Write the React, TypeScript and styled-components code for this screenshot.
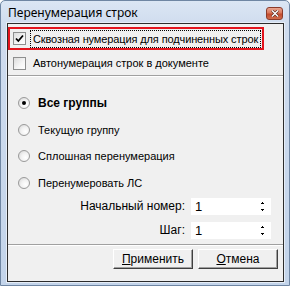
import styled, { createGlobalStyle } from "styled-components";

const GlobalStyle = createGlobalStyle`
  html, body {
    margin: 0;
    padding: 0;
    background: #ffffff;
  }
  body {
    font-family: "Liberation Sans", Arial, sans-serif;
    font-size: 11px;
    color: #000;
  }
`;

const Frame = styled.div`
  width: 290px;
  height: 286px;
  box-sizing: border-box;
  border: 1px solid #6f86a3;
  border-radius: 5px 5px 0 0;
  background: linear-gradient(to bottom, #dbe6f4 0px, #cfdcee 24px, #c3d4ea 100%);
  display: flex;
  flex-direction: column;
  padding: 0 5px 3px 6px;
`;

const TitleBar = styled.div`
  height: 22px;
  display: flex;
  align-items: center;
  justify-content: space-between;
`;

const Title = styled.div`
  font-family: "Noto Sans", "Liberation Sans", sans-serif;
  font-size: 12px;
  color: #000;
  padding-left: 1px;
  margin-top: 1px;
`;

const CloseButton = styled.div`
  width: 17px;
  height: 13px;
  box-sizing: border-box;
  border: 1px solid #8b3b2a;
  border-radius: 3px;
  background: linear-gradient(to bottom, #e9a590 0%, #d9765a 45%, #c24a2c 55%, #d06c4d 100%);
  display: flex;
  align-items: center;
  justify-content: center;
  margin-top: 3px;
  margin-right: 1px;
`;

const Client = styled.div`
  flex: 1;
  border: 1px solid #2c2c2c;
  background: #f0f0f0;
  display: flex;
  flex-direction: column;
  box-shadow: 0 0 0 1px #e6edf6;
`;

const Highlight = styled.div`
  margin: 3px 0 0 0;
  width: 256px;
  height: 23px;
  box-sizing: border-box;
  border: 2px solid #e3141c;
  display: flex;
  align-items: center;
  padding-left: 3px;
`;

const Row = styled.label`
  display: flex;
  align-items: center;
  height: 14px;
  white-space: nowrap;
`;

const CheckRow = styled(Row)`
  margin: 6px 0 0 5px;
`;

const Box = styled.span`
  flex: none;
  width: 13px;
  height: 13px;
  box-sizing: border-box;
  border: 1px solid #8e8f8f;
  background: linear-gradient(135deg, #dcdcdc 0%, #f6f6f6 60%, #ffffff 100%);
  display: flex;
  align-items: center;
  justify-content: center;
  margin-right: 6px;
`;

const Caption = styled.span<{ $focus?: boolean; $bold?: boolean }>`
  padding: 0 1px;
  line-height: 14px;
  white-space: nowrap;
  font-weight: ${(p) => (p.$bold ? "bold" : "normal")};
  font-size: ${(p) => (p.$bold ? "12px" : "11px")};
  letter-spacing: ${(p) => (p.$focus ? "-0.12px" : "normal")};
  outline: ${(p) => (p.$focus ? "1px dotted #000" : "none")};
  outline-offset: 1px;
`;

const Separator = styled.div<{ $top: number }>`
  margin-top: ${(p) => p.$top}px;
  height: 0;
  border-top: 1px solid #a0a0a0;
  border-bottom: 1px solid #ffffff;
`;

const Radios = styled.div`
  display: flex;
  flex-direction: column;
  gap: 12.5px;
  padding: 19px 0 0 10px;
`;

const Radio = styled.span<{ $checked?: boolean }>`
  flex: none;
  width: 12px;
  height: 12px;
  box-sizing: border-box;
  border-radius: 50%;
  border: 1px solid #9a9a9a;
  background: radial-gradient(circle at 65% 65%, #ffffff 0%, #f2f2f2 45%, #d2d2d2 100%);
  display: flex;
  align-items: center;
  justify-content: center;
  margin-right: 7px;
  &::after {
    content: "";
    width: 4px;
    height: 4px;
    border-radius: 50%;
    background: ${(p) => (p.$checked ? "#000" : "transparent")};
  }
`;

const Fields = styled.div`
  display: grid;
  grid-template-columns: auto 80px;
  column-gap: 6px;
  row-gap: 7px;
  align-items: center;
  justify-content: end;
  margin: 8px 12px 0 0;
`;

const FieldLabel = styled.span`
  text-align: right;
  font-size: 12px;
`;

const NumberBox = styled.div`
  height: 17px;
  background: #ffffff;
  display: flex;
  align-items: center;
  justify-content: space-between;
  padding: 0 6px 0 4px;
  font-size: 13px;
`;

const Buttons = styled.div`
  display: flex;
  justify-content: flex-end;
  gap: 5px;
  padding: 3px 5px 0 0;
`;

const Button = styled.div`
  width: 80px;
  height: 20px;
  box-sizing: border-box;
  background: #f0f0f0;
  border-top: 1px solid #ffffff;
  border-left: 1px solid #ffffff;
  border-right: 1px solid #404040;
  border-bottom: 1px solid #404040;
  box-shadow: inset -1px -1px 0 #a0a0a0;
  display: flex;
  align-items: center;
  justify-content: center;
  font-size: 12px;
  span {
    text-decoration: underline;
  }
`;

const Spin = () => (
  <svg width="5" height="11" viewBox="0 0 5 11">
    <path d="M2 1h1v1h1v1H1V2h1z" fill="#000" />
    <path d="M1 8h3v1H3v1H2V9H1z" fill="#000" />
  </svg>
);

export default function App() {
  return (
    <>
      <GlobalStyle />
      <Frame>
        <TitleBar>
          <Title>Перенумерация строк</Title>
          <CloseButton>
            <svg width="8" height="7" viewBox="0 0 8 7">
              <path d="M1 0.5L7 6.5M7 0.5L1 6.5" stroke="#5a2a20" strokeWidth="2.6" />
              <path d="M1 0.5L7 6.5M7 0.5L1 6.5" stroke="#ffffff" strokeWidth="1.4" />
            </svg>
          </CloseButton>
        </TitleBar>
        <Client>
          <Highlight>
            <Row>
              <Box>
                <svg width="9" height="9" viewBox="0 0 9 9">
                  <path d="M1 4.5L3.3 7L8 1.5" fill="none" stroke="#000" strokeWidth="1.8" />
                </svg>
              </Box>
              <Caption $focus>Сквозная нумерация для подчиненных строк</Caption>
            </Row>
          </Highlight>
          <CheckRow>
            <Box />
            <Caption>Автонумерация строк в документе</Caption>
          </CheckRow>
          <Separator $top={5} />
          <Radios>
            <Row>
              <Radio $checked />
              <Caption $bold>Все группы</Caption>
            </Row>
            <Row>
              <Radio />
              <Caption>Текущую группу</Caption>
            </Row>
            <Row>
              <Radio />
              <Caption>Сплошная перенумерация</Caption>
            </Row>
            <Row>
              <Radio />
              <Caption>Перенумеровать ЛС</Caption>
            </Row>
          </Radios>
          <Fields>
            <FieldLabel>Начальный номер:</FieldLabel>
            <NumberBox>
              1<Spin />
            </NumberBox>
            <FieldLabel>Шаг:</FieldLabel>
            <NumberBox>
              1<Spin />
            </NumberBox>
          </Fields>
          <Separator $top={5} />
          <Buttons>
            <Button>
              <span>П</span>рименить
            </Button>
            <Button>
              <span>О</span>тмена
            </Button>
          </Buttons>
        </Client>
      </Frame>
    </>
  );
}
